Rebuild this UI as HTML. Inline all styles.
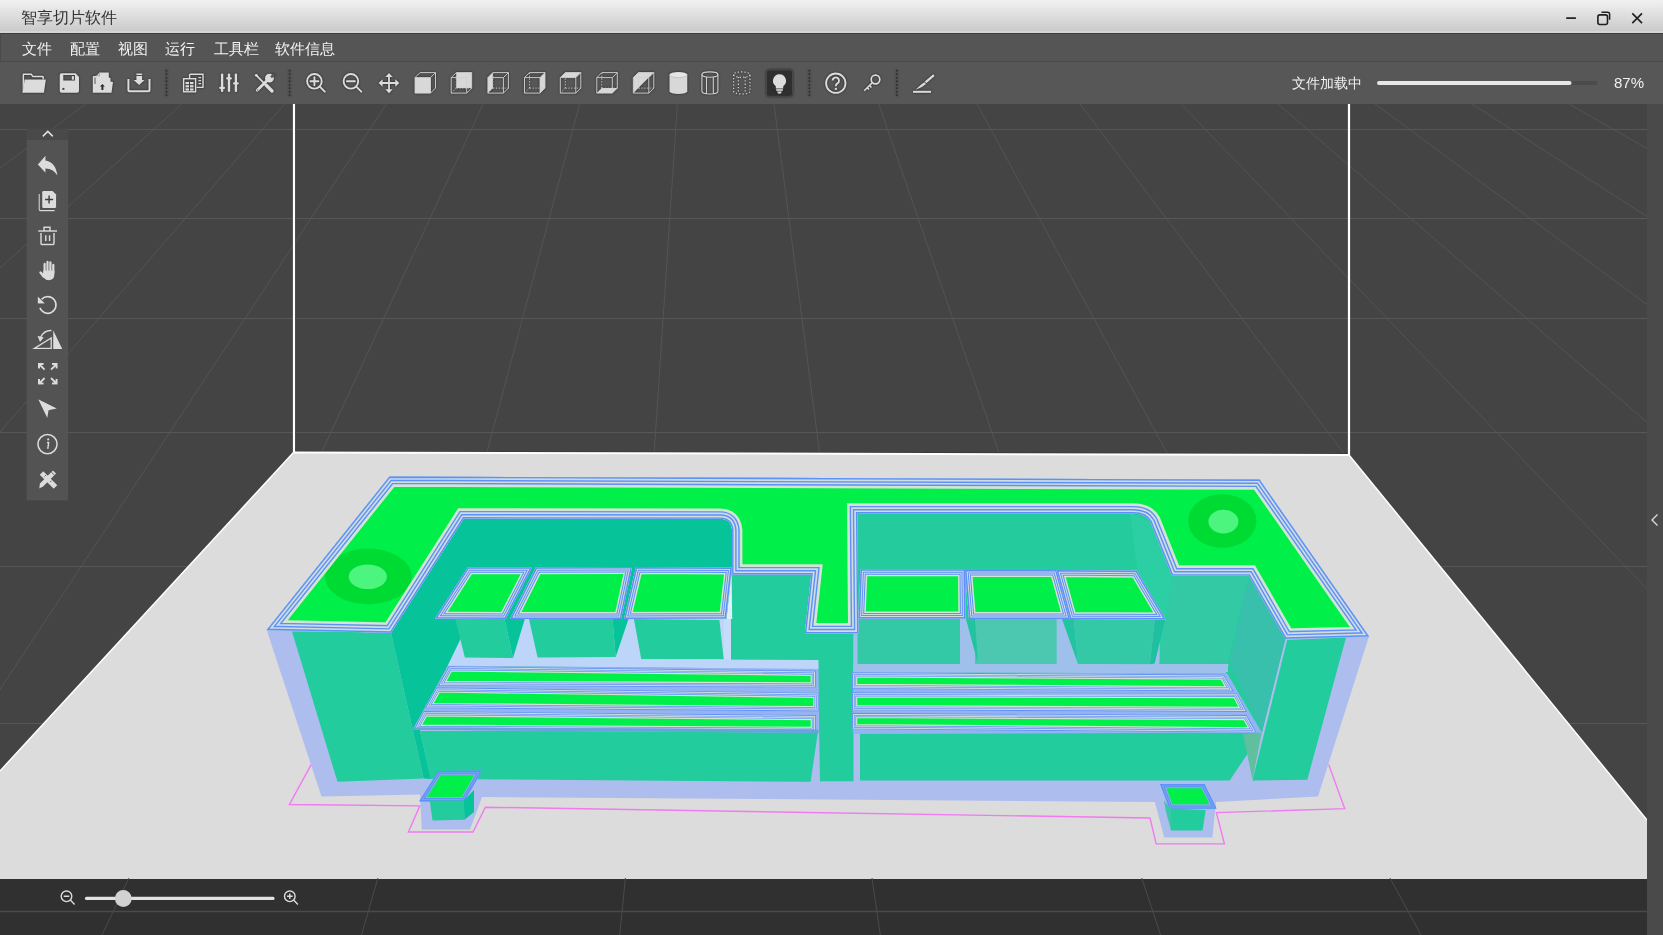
<!DOCTYPE html>
<html><head><meta charset="utf-8">
<style>
*{margin:0;padding:0;box-sizing:border-box}
html,body{width:1663px;height:935px;overflow:hidden;background:#444;font-family:"Liberation Sans",sans-serif}
.abs{position:absolute}
.t,#menu span,.txt{will-change:transform}
#vp{left:0;top:0}
#title{left:0;top:0;width:1663px;height:33px;background:linear-gradient(#f1f1f1 0,#cbcbcb 30.8px,#d5d5d5 30.8px,#d5d5d5 33px)}
#title .t{left:21.2px;top:8.5px;font-size:15.5px;color:#333;line-height:18px;white-space:nowrap}
#menu{left:0;top:33px;width:1663px;height:29px;background:#555;border-top:1px solid #3d3d3d;border-bottom:1px solid #4a4a4a;border-left:1px solid #4a4a4a}
#menu span{position:absolute;top:7.3px;font-size:14.5px;color:#f2f2f2;line-height:16px;white-space:nowrap}
#tool{left:0;top:62px;width:1663px;height:42px;background:#575757}
#tool .txt{position:absolute;top:75px;font-size:14px;color:#f0f0f0;line-height:16px;white-space:nowrap}
</style></head><body>
<svg id="vp" class="abs" width="1663" height="935" viewBox="0 0 1663 935">
<rect x="0" y="104" width="1647" height="831" fill="#444"/>
<g stroke="#575757" stroke-width="1" fill="none">
<path d="M0 129.5H1647M0 218.5H1647M0 318.5H1647M0 432.5H1647M0 566.5H1647M0 723.5H1647"/>
<path stroke="#545454" d="M85.6 104L-1022 935M181.9 104L-740 935M284.5 104L-436 935M386.5 104L-162.1 935M483.0 104L98.0 935M579.6 104L358.5 935M677.4 104L622.1 935M774.0 104L882.5 935M878.8 104L1165.1 935M977.0 104L1429.8 935M1080.0 104L1707.5 935M1181.0 104L1979.8 935M1278.0 104L2241.3 935M1375.0 104L2502.8 935M1472.0 104L2764.3 935M1569.0 104L3025.8 935"/>
</g>
<!-- bed -->
<polygon points="293.5,452.5 1349,455 1647,820 1647,879 0,879 0,771" fill="#dcdcdc"/>
<path d="M295.5 104V451M295 451.2L1347.5 453.6" stroke="#3a3a3a" stroke-width="1" fill="none"/>
<polyline points="0,771 293.5,452.5" fill="none" stroke="#fff" stroke-width="1.5"/><polyline points="1349,455 1647,820" fill="none" stroke="#fff" stroke-width="1.5"/><polyline points="293.5,452.5 1349,455" fill="none" stroke="#fff" stroke-width="2"/>
<path d="M294 104V452.5M1349 104V455" stroke="#fff" stroke-width="2.2"/>
<!-- bottom bar -->
<rect x="0" y="879" width="1647" height="56" fill="#303030"/>
<g stroke="#4a4a4a" stroke-width="1" fill="none">
<path d="M0 911.5H1647" stroke-width="1.6"/>
<path d="M377.9 878L361.5 935M625.4 878L619.7 935M872 878L880.3 935M1141.8 878L1160.6 935M1390 878L1421 935M129 878L102 935"/>
</g>
<rect x="292.5" y="32" width="2" height="1.2" fill="#fff"/><rect x="292.5" y="61" width="2" height="1.2" fill="#fff"/><rect x="1348" y="32" width="2" height="1.2" fill="#fff"/><rect x="1348" y="61" width="2" height="1.2" fill="#fff"/>
<!-- right panel -->
<rect x="1647" y="104" width="16" height="831" fill="#4a4a4a"/>
<path d="M1657.5 514.5L1652 520L1657.5 525.5" stroke="#ddd" stroke-width="1.3" fill="none"/>
<!--MODEL-->
<g id="model">
<polyline points="311.3,764.4 289.4,804.5 419.9,805.9 408.4,832 473,832 485.4,807.2 1150,818 1156.2,843.9 1224.4,843.9 1216.4,812.6 1344.7,808.6 1328.7,764.4" fill="none" stroke="#f07af0" stroke-width="1.4"/>
<polygon points="266.7,630 1368.9,636.5 1318,796.5 1216,802 1212.4,837.4 1164.2,837.4 1154.9,802 482,797 470,829.4 421.8,829.4 420,794.5 321.5,796.5" fill="#adbdee" />
<polygon points="463.8,518.5 732,518.5 732,574.5 731,668 447,667 420,731 431,779 423.6,778.6 391,632.7" fill="#07c399" />
<polygon points="731,574.5 811.3,574.5 804.9,633.3 853.5,633.3 853.5,781.3 820,781.3 818,660 731,660" fill="#22cc9d" />
<polygon points="466,619 731,619 731,667 447.5,666 461,638" fill="#bdd5f8" />
<polygon points="723.7,619 731,619 731,668 723.7,668" fill="#c6dcfa" />
<polygon points="455.3,619 504.5,619 513,658 464.9,657.5" fill="#22cc9d" />
<polygon points="504.5,619 524.8,619 513,658" fill="#07c399" />
<polygon points="529,619 612.5,619 615.7,657 537.6,657.5" fill="#22cc9d" />
<polygon points="612.5,619 628.5,619 615.7,657" fill="#07c399" />
<polygon points="633.9,619 719.4,620 723.7,659.2 641.3,659.2" fill="#22cc9d" />
<polygon points="857.3,510 1140,510 1155,520 1172,575.6 1249,575.6 1285.4,638.7 1262,732 860,732 853.5,633.3" fill="#24cc9d" />
<polygon points="1130,513 1150.6,522 1172,575.6 1159.5,664 1150,664" fill="#2ccfa4" />
<polygon points="1249,575.6 1285.4,638.7 1262,732 1229.8,662" fill="#38c0ac" />
<polygon points="853.5,619 1160,619 1159.5,664 1228,664 1228,672 853.5,672" fill="#9fc0ea" />
<polygon points="1159.5,664 1172,575.6 1249,575.6 1227.8,663.6" fill="#33c9a5" />
<polygon points="857.5,618.7 960,618.7 960,664 857.5,664" fill="#33c9a6" />
<polygon points="975,619 1056.7,619 1056.7,664 975,664" fill="#4dc8b0" />
<polygon points="966,619 975,619 978,664" fill="#22c4a0" />
<polygon points="1074,619 1154.7,619 1149.8,664.6 1078,664" fill="#33c9a6" />
<polygon points="1154.7,619.4 1165.2,619.4 1154.7,663.6 1149.8,664.6" fill="#1fc0a0" />
<polygon points="1062,619 1074,619 1078,664" fill="#22c4a0" />
<polygon points="420,731 818,731.5 810.6,781.8 431,779" fill="#22cc9d" />
<polygon points="860,729.7 1261.8,732.4 1229.7,780.5 860,780.5" fill="#22cc9d" />
<polygon points="1243,733.7 1261.8,732.4 1252.5,779.7" fill="#5fbf9f" />
<polygon points="292,631.6 391,632.6 423.6,778.6 337.5,781.8" fill="#22cc9d" />
<polygon points="1287.2,640.1 1346,637.4 1307.3,779.7 1252.5,780.5" fill="#22cc9d" />
<defs><path id="p1" d="M389.5 476.5L1259.5 479.5L1369 636.5L1285.4 638.7L1249 575.6L1172 575.6L1150.6 522Q1146 513.5 1133.5 513.5L857.3 513.5L858.4 633.3L804.9 633.3L811.3 574.5L732.1 574.5L732.1 530Q731 518.8 720 518.8L463.8 518.5L391 632.7L266.7 630Z"/><clipPath id="c1"><use href="#p1"/></clipPath></defs>
<g clip-path="url(#c1)" fill="none">
<use href="#p1" fill="#00ef48"/>
<ellipse cx="368.4" cy="576.5" rx="43.4" ry="28" fill="#00db34"/><ellipse cx="367.8" cy="576.8" rx="19.1" ry="12.3" fill="#4cf57e"/><ellipse cx="1222.3" cy="521" rx="34.2" ry="26.7" fill="#00db34"/><ellipse cx="1223.4" cy="521.6" rx="15" ry="11.8" fill="#4cf57e"/>
<use href="#p1" stroke="#d2e4d4" stroke-width="20.6"/>
<use href="#p1" stroke="#5f8ff9" stroke-width="15.2"/>
<use href="#p1" stroke="#cddde0" stroke-width="12.4"/>
<use href="#p1" stroke="#5f8ff9" stroke-width="9"/>
<use href="#p1" stroke="#cddde0" stroke-width="6.2"/>
<use href="#p1" stroke="#5f8ff9" stroke-width="2.8"/>
</g>
<defs><path id="p2" d="M468 567.3L532 567.3L505.5 619L435 618.6Z"/><clipPath id="c2"><use href="#p2"/></clipPath></defs>
<g clip-path="url(#c2)" fill="none">
<use href="#p2" fill="#00ef48"/>
<use href="#p2" stroke="#d2e4d4" stroke-width="14"/>
<use href="#p2" stroke="#5f8ff9" stroke-width="11"/>
<use href="#p2" stroke="#cddde0" stroke-width="9"/>
<use href="#p2" stroke="#5f8ff9" stroke-width="7"/>
<use href="#p2" stroke="#cddde0" stroke-width="5"/>
<use href="#p2" stroke="#5f8ff9" stroke-width="3"/>
</g>
<defs><path id="p3" d="M536 567.3L632 567L621 619L510 619Z"/><clipPath id="c3"><use href="#p3"/></clipPath></defs>
<g clip-path="url(#c3)" fill="none">
<use href="#p3" fill="#00ef48"/>
<use href="#p3" stroke="#d2e4d4" stroke-width="14"/>
<use href="#p3" stroke="#5f8ff9" stroke-width="11"/>
<use href="#p3" stroke="#cddde0" stroke-width="9"/>
<use href="#p3" stroke="#5f8ff9" stroke-width="7"/>
<use href="#p3" stroke="#cddde0" stroke-width="5"/>
<use href="#p3" stroke="#5f8ff9" stroke-width="3"/>
</g>
<defs><path id="p4" d="M636 567L731.8 567.4L726 618.5L624 619Z"/><clipPath id="c4"><use href="#p4"/></clipPath></defs>
<g clip-path="url(#c4)" fill="none">
<use href="#p4" fill="#00ef48"/>
<use href="#p4" stroke="#d2e4d4" stroke-width="14"/>
<use href="#p4" stroke="#5f8ff9" stroke-width="11"/>
<use href="#p4" stroke="#cddde0" stroke-width="9"/>
<use href="#p4" stroke="#5f8ff9" stroke-width="7"/>
<use href="#p4" stroke="#cddde0" stroke-width="5"/>
<use href="#p4" stroke="#5f8ff9" stroke-width="3"/>
</g>
<defs><path id="p5" d="M860.5 569.2L965 569.2L965.4 618.4L858.5 618.4Z"/><clipPath id="c5"><use href="#p5"/></clipPath></defs>
<g clip-path="url(#c5)" fill="none">
<use href="#p5" fill="#00ef48"/>
<use href="#p5" stroke="#d2e4d4" stroke-width="14"/>
<use href="#p5" stroke="#5f8ff9" stroke-width="11"/>
<use href="#p5" stroke="#cddde0" stroke-width="9"/>
<use href="#p5" stroke="#5f8ff9" stroke-width="7"/>
<use href="#p5" stroke="#cddde0" stroke-width="5"/>
<use href="#p5" stroke="#5f8ff9" stroke-width="3"/>
</g>
<defs><path id="p6" d="M965 570L1056.5 570L1070 619L969 619Z"/><clipPath id="c6"><use href="#p6"/></clipPath></defs>
<g clip-path="url(#c6)" fill="none">
<use href="#p6" fill="#00ef48"/>
<use href="#p6" stroke="#d2e4d4" stroke-width="14"/>
<use href="#p6" stroke="#5f8ff9" stroke-width="11"/>
<use href="#p6" stroke="#cddde0" stroke-width="9"/>
<use href="#p6" stroke="#5f8ff9" stroke-width="7"/>
<use href="#p6" stroke="#cddde0" stroke-width="5"/>
<use href="#p6" stroke="#5f8ff9" stroke-width="3"/>
</g>
<defs><path id="p7" d="M1056.5 570L1136.7 570.8L1165.5 619.4L1070 619Z"/><clipPath id="c7"><use href="#p7"/></clipPath></defs>
<g clip-path="url(#c7)" fill="none">
<use href="#p7" fill="#00ef48"/>
<use href="#p7" stroke="#d2e4d4" stroke-width="14"/>
<use href="#p7" stroke="#5f8ff9" stroke-width="11"/>
<use href="#p7" stroke="#cddde0" stroke-width="9"/>
<use href="#p7" stroke="#5f8ff9" stroke-width="7"/>
<use href="#p7" stroke="#cddde0" stroke-width="5"/>
<use href="#p7" stroke="#5f8ff9" stroke-width="3"/>
</g>
<polygon points="726.5,619 731.6,572 732.2,619" fill="#e2eefa" />
<polygon points="458,658.2 818.5,659.9 818.5,669.1 447.7,665.8" fill="#bdd5f8" />
<polygon points="853.1,664.2 1228.8,664.3 1225.6,673.5 853.1,672.3" fill="#9fc0ea" />
<polygon points="447.7,665.8 818.5,669.1 818.5,732.9 412.6,729.7" fill="#93b3f4" />
<polygon points="853.1,672.3 1227.2,673.5 1261.8,732.5 853.1,734" fill="#93b3f4" />
<defs><path id="p8" d="M448.75 666.2L815.9 670.6L815.9 687.6L437.85 686Z"/><clipPath id="c8"><use href="#p8"/></clipPath></defs>
<g clip-path="url(#c8)" fill="none">
<use href="#p8" fill="#00ef48"/>
<use href="#p8" stroke="#d2e4d4" stroke-width="10.6"/>
<use href="#p8" stroke="#5f8ff9" stroke-width="8.2"/>
<use href="#p8" stroke="#cddde0" stroke-width="6.8"/>
<use href="#p8" stroke="#5f8ff9" stroke-width="5.2"/>
<use href="#p8" stroke="#cddde0" stroke-width="3.8"/>
<use href="#p8" stroke="#5f8ff9" stroke-width="1.8"/>
</g>
<defs><path id="p9" d="M436.55 687.3L818.6 692.7L818.6 711.4L424.85 708.2Z"/><clipPath id="c9"><use href="#p9"/></clipPath></defs>
<g clip-path="url(#c9)" fill="none">
<use href="#p9" fill="#00ef48"/>
<use href="#p9" stroke="#d2e4d4" stroke-width="10.6"/>
<use href="#p9" stroke="#5f8ff9" stroke-width="8.2"/>
<use href="#p9" stroke="#cddde0" stroke-width="6.8"/>
<use href="#p9" stroke="#5f8ff9" stroke-width="5.2"/>
<use href="#p9" stroke="#cddde0" stroke-width="3.8"/>
<use href="#p9" stroke="#5f8ff9" stroke-width="1.8"/>
</g>
<defs><path id="p10" d="M423.55 711.1L816 715L816 732L413.65 729.8Z"/><clipPath id="c10"><use href="#p10"/></clipPath></defs>
<g clip-path="url(#c10)" fill="none">
<use href="#p10" fill="#00ef48"/>
<use href="#p10" stroke="#d2e4d4" stroke-width="10.6"/>
<use href="#p10" stroke="#5f8ff9" stroke-width="8.2"/>
<use href="#p10" stroke="#cddde0" stroke-width="6.8"/>
<use href="#p10" stroke="#5f8ff9" stroke-width="5.2"/>
<use href="#p10" stroke="#cddde0" stroke-width="3.8"/>
<use href="#p10" stroke="#5f8ff9" stroke-width="1.8"/>
</g>
<defs><path id="p11" d="M852 672.2L1223.8 674.5L1234 691.5L852 689Z"/><clipPath id="c11"><use href="#p11"/></clipPath></defs>
<g clip-path="url(#c11)" fill="none">
<use href="#p11" fill="#00ef48"/>
<use href="#p11" stroke="#d2e4d4" stroke-width="10.6"/>
<use href="#p11" stroke="#5f8ff9" stroke-width="8.2"/>
<use href="#p11" stroke="#cddde0" stroke-width="6.8"/>
<use href="#p11" stroke="#5f8ff9" stroke-width="5.2"/>
<use href="#p11" stroke="#cddde0" stroke-width="3.8"/>
<use href="#p11" stroke="#5f8ff9" stroke-width="1.8"/>
</g>
<defs><path id="p12" d="M852 692.2L1237 692.9L1247 712L852 710.3Z"/><clipPath id="c12"><use href="#p12"/></clipPath></defs>
<g clip-path="url(#c12)" fill="none">
<use href="#p12" fill="#00ef48"/>
<use href="#p12" stroke="#d2e4d4" stroke-width="10.6"/>
<use href="#p12" stroke="#5f8ff9" stroke-width="8.2"/>
<use href="#p12" stroke="#cddde0" stroke-width="6.8"/>
<use href="#p12" stroke="#5f8ff9" stroke-width="5.2"/>
<use href="#p12" stroke="#cddde0" stroke-width="3.8"/>
<use href="#p12" stroke="#5f8ff9" stroke-width="1.8"/>
</g>
<defs><path id="p13" d="M852 712.8L1246.7 715L1256.7 732.6L852 729.3Z"/><clipPath id="c13"><use href="#p13"/></clipPath></defs>
<g clip-path="url(#c13)" fill="none">
<use href="#p13" fill="#00ef48"/>
<use href="#p13" stroke="#d2e4d4" stroke-width="10.6"/>
<use href="#p13" stroke="#5f8ff9" stroke-width="8.2"/>
<use href="#p13" stroke="#cddde0" stroke-width="6.8"/>
<use href="#p13" stroke="#5f8ff9" stroke-width="5.2"/>
<use href="#p13" stroke="#cddde0" stroke-width="3.8"/>
<use href="#p13" stroke="#5f8ff9" stroke-width="1.8"/>
</g>
<polygon points="412.6,727.5 818.5,729.5 818.5,732.9 412.6,729.7" fill="#62a6da" />
<defs><path id="p14" d="M438.5 771L481.8 770.8L464.1 801.2L419.4 801.2Z"/><clipPath id="c14"><use href="#p14"/></clipPath></defs>
<g clip-path="url(#c14)" fill="none">
<use href="#p14" fill="#00ef48"/>
<use href="#p14" stroke="#86b2e6" stroke-width="8.6"/>
<use href="#p14" stroke="#5f8ff9" stroke-width="6.4"/>
<use href="#p14" stroke="#79a6ee" stroke-width="4.4"/>
<use href="#p14" stroke="#5f8ff9" stroke-width="2.4"/>
</g>
<polygon points="429.8,800.5 463.7,800.5 464.5,819.8 432.5,820.6" fill="#22cc9d" />
<polygon points="463.7,800.5 474,790 474,812 464.5,819.8" fill="#07c399" />
<defs><path id="p15" d="M1160.2 784L1204.3 784L1216.4 808.6L1169.6 808.6Z"/><clipPath id="c15"><use href="#p15"/></clipPath></defs>
<g clip-path="url(#c15)" fill="none">
<use href="#p15" fill="#00ef48"/>
<use href="#p15" stroke="#86b2e6" stroke-width="8.6"/>
<use href="#p15" stroke="#5f8ff9" stroke-width="6.4"/>
<use href="#p15" stroke="#79a6ee" stroke-width="4.4"/>
<use href="#p15" stroke="#5f8ff9" stroke-width="2.4"/>
</g>
<polygon points="1171,808.6 1205.7,810 1202.5,830.5 1171,830.5" fill="#22cc9d" />
<polygon points="1164,800.5 1171,808.6 1171,830.5 1166,812" fill="#3cc6aa" />
</g>
<!--/MODEL-->
</svg>
<div id="title" class="abs"><div class="t abs">智享切片软件</div>
<svg class="abs" style="left:0;top:0" width="1663" height="33">
<path d="M1566.2 18.1H1575.9" stroke="#1e1e1e" stroke-width="1.7"/>
<path d="M1601.5 12.2H1607.6a2 2 0 0 1 2 2V19.8" fill="none" stroke="#1e1e1e" stroke-width="1.5"/>
<rect x="1597.9" y="14.9" width="9.6" height="9.6" rx="2" fill="none" stroke="#1e1e1e" stroke-width="1.6"/>
<path d="M1632.3 13.4L1642 23.1M1642 13.4L1632.3 23.1" stroke="#1e1e1e" stroke-width="1.6"/>
</svg>
</div>
<div id="menu" class="abs">
<span style="left:20.5px">文件</span><span style="left:69px">配置</span><span style="left:116.5px">视图</span><span style="left:164px">运行</span><span style="left:212.5px">工具栏</span><span style="left:274px">软件信息</span>
</div>
<div id="tool" class="abs"></div>
<!--TB-->
<svg class="abs" style="left:0;top:62px;filter:drop-shadow(0 0 0.8px rgba(30,30,30,.9))" width="1663" height="42" viewBox="0 62 1663 42">
<g fill="#dcdcdc" stroke="none">
<!-- folder -->
<path d="M22.6 92.7V74.8Q22.6 73.6 23.8 73.6H31.6L33.3 75.8H42.6Q43.9 75.8 43.9 77.1V79.3H42.4V77.3H32.6L30.9 75.1H24.1V80.5Q24 85 23.4 92.7Z"/>
<path d="M24.6 79.6H45.9L43.9 92.7H22.7Z"/>
<!-- save -->
<path d="M59.7 75.2Q59.7 73.3 61.6 73.3H75.6L79 77V90.8Q79 92.7 77.1 92.7H61.6Q59.7 92.7 59.7 90.8ZM63.3 75.1V80.4H74.9V75.1Z" fill-rule="evenodd"/>
<rect x="71.8" y="76.1" width="2.1" height="3.6"/>
<rect x="62.4" y="87.9" width="2" height="2" fill="#444"/>
<!-- upload doc -->
<path d="M96.5 75.8L99.5 72.4H108.8V77.5L110.5 78V81.5L113 82L111.5 92.7H92.8L92.8 76.3Z"/>
<path d="M99.5 72.4V75.8H96.5" fill="none" stroke="#9a9a9a" stroke-width="0.8"/>
<path d="M95 77.5V84" fill="none" stroke="#555" stroke-width="1"/>
<path d="M102.4 84L99.9 86.6H101.4V90.1H103.4V86.6H104.9Z" fill="#2e2e2e"/>
<!-- download tray -->
<path d="M128.4 79V90.2Q128.4 91.2 129.4 91.2H148.5Q149.5 91.2 149.5 90.2V79" fill="none" stroke="#dcdcdc" stroke-width="2"/>
<rect x="136.4" y="73.5" width="5.7" height="1.6"/>
<rect x="136.4" y="76" width="5.7" height="4.2"/>
<path d="M133.6 80H144.6L139.1 85Z"/>
<!-- grid docs -->
<path d="M189.6 74.3H203V87.4H196.6M189.6 78V74.3" fill="none" stroke="#dcdcdc" stroke-width="1.4"/>
<rect x="198.5" y="77" width="2.6" height="1.2"/><rect x="198.5" y="80" width="2.6" height="1.2"/><rect x="198.5" y="83" width="2.6" height="1.2"/>
<rect x="183.6" y="78.7" width="12" height="13.1" fill="none" stroke="#dcdcdc" stroke-width="1.4"/>
<rect x="185.5" y="82" width="3.5" height="2.2"/><rect x="190" y="82" width="3.5" height="2.2"/>
<rect x="185.5" y="85.2" width="3.5" height="2.2"/><rect x="190" y="85.2" width="3.5" height="2.2"/>
<rect x="185.5" y="88.4" width="3.5" height="2.2"/><rect x="190" y="88.4" width="3.5" height="2.2"/>
<!-- sliders -->
<rect x="220.9" y="73.6" width="2.4" height="18.3" rx="1"/><rect x="227.8" y="73.6" width="2.4" height="18.3" rx="1"/><rect x="234.7" y="73.6" width="2.4" height="18.3" rx="1"/>
<rect x="219.2" y="86.8" width="5.8" height="2.2" rx="1"/><rect x="226.1" y="77.2" width="5.8" height="2.2" rx="1"/><rect x="233" y="82.3" width="5.8" height="2.2" rx="1"/>
<!-- tools -->
<path d="M256.6 75.6L265.3 84.3" stroke="#dcdcdc" stroke-width="1.7" stroke-linecap="round"/>
<circle cx="256.3" cy="75.3" r="1.4"/>
<path d="M266 85L272 91" stroke="#dcdcdc" stroke-width="3.4" stroke-linecap="round"/>
<path d="M257.2 90.3L266.8 80.7" stroke="#dcdcdc" stroke-width="2.8" stroke-linecap="round"/>
<circle cx="269.4" cy="78.2" r="4.4"/>
<path d="M270.2 76.4L273.6 73L275.4 74.8L272 78.2Z" fill="#575757"/>
<circle cx="257.6" cy="89.9" r="0.7" fill="#575757"/>
<polygon points="415.0,77.6 430.5,77.6 430.5,93.1 415.0,93.1" fill="#d8d8d8"/><path d="M415.0 77.6L430.5 77.6M430.5 77.6L430.5 93.1M430.5 93.1L415.0 93.1M415.0 93.1L415.0 77.6M420.0 72.6L435.5 72.6M435.5 72.6L435.5 88.1M415.0 77.6L420.0 72.6M430.5 77.6L435.5 72.6M430.5 93.1L435.5 88.1" fill="none" stroke="#d0d0d0" stroke-width="0.95"/>
<polygon points="456.2,72.6 471.7,72.6 471.7,88.1 456.2,88.1" fill="#d8d8d8"/><path d="M451.2 77.6L466.7 77.6M466.7 77.6L466.7 93.1M466.7 93.1L451.2 93.1M451.2 93.1L451.2 77.6M456.2 72.6L471.7 72.6M471.7 72.6L471.7 88.1M451.2 77.6L456.2 72.6M466.7 77.6L471.7 72.6M466.7 93.1L471.7 88.1" fill="none" stroke="#d0d0d0" stroke-width="0.95"/><path d="M471.7 88.1L456.2 88.1M456.2 88.1L456.2 72.6M451.2 93.1L456.2 88.1" fill="none" stroke="#c8c8c8" stroke-width="1" stroke-dasharray="1.2 1.6"/>
<polygon points="487.9,77.6 492.9,72.6 492.9,88.1 487.9,93.1" fill="#d8d8d8"/><path d="M487.9 77.6L503.4 77.6M503.4 77.6L503.4 93.1M503.4 93.1L487.9 93.1M487.9 93.1L487.9 77.6M492.9 72.6L508.4 72.6M508.4 72.6L508.4 88.1M487.9 77.6L492.9 72.6M503.4 77.6L508.4 72.6M503.4 93.1L508.4 88.1" fill="none" stroke="#d0d0d0" stroke-width="0.95"/><path d="M508.4 88.1L492.9 88.1M492.9 88.1L492.9 72.6M487.9 93.1L492.9 88.1" fill="none" stroke="#c8c8c8" stroke-width="1" stroke-dasharray="1.2 1.6"/>
<polygon points="540.0,77.6 545.0,72.6 545.0,88.1 540.0,93.1" fill="#d8d8d8"/><path d="M524.5 77.6L540.0 77.6M540.0 77.6L540.0 93.1M540.0 93.1L524.5 93.1M524.5 93.1L524.5 77.6M529.5 72.6L545.0 72.6M545.0 72.6L545.0 88.1M524.5 77.6L529.5 72.6M540.0 77.6L545.0 72.6M540.0 93.1L545.0 88.1" fill="none" stroke="#d0d0d0" stroke-width="0.95"/><path d="M545.0 88.1L529.5 88.1M529.5 88.1L529.5 72.6M524.5 93.1L529.5 88.1" fill="none" stroke="#c8c8c8" stroke-width="1" stroke-dasharray="1.2 1.6"/>
<polygon points="560.3,77.6 565.3,72.6 580.8,72.6 575.8,77.6" fill="#d8d8d8"/><path d="M560.3 77.6L575.8 77.6M575.8 77.6L575.8 93.1M575.8 93.1L560.3 93.1M560.3 93.1L560.3 77.6M565.3 72.6L580.8 72.6M580.8 72.6L580.8 88.1M560.3 77.6L565.3 72.6M575.8 77.6L580.8 72.6M575.8 93.1L580.8 88.1" fill="none" stroke="#d0d0d0" stroke-width="0.95"/><path d="M580.8 88.1L565.3 88.1M565.3 88.1L565.3 72.6M560.3 93.1L565.3 88.1" fill="none" stroke="#c8c8c8" stroke-width="1" stroke-dasharray="1.2 1.6"/>
<polygon points="596.8,93.1 601.8,88.1 617.3,88.1 612.3,93.1" fill="#d8d8d8"/><path d="M596.8 77.6L612.3 77.6M612.3 77.6L612.3 93.1M612.3 93.1L596.8 93.1M596.8 93.1L596.8 77.6M601.8 72.6L617.3 72.6M617.3 72.6L617.3 88.1M596.8 77.6L601.8 72.6M612.3 77.6L617.3 72.6M612.3 93.1L617.3 88.1" fill="none" stroke="#d0d0d0" stroke-width="0.95"/><path d="M617.3 88.1L601.8 88.1M601.8 88.1L601.8 72.6M596.8 93.1L601.8 88.1" fill="none" stroke="#c8c8c8" stroke-width="1" stroke-dasharray="1.2 1.6"/>
<polygon points="633.3,77.6 638.3,72.6 653.8,72.6 633.3,93.1" fill="#d8d8d8"/><path d="M633.3 77.6L648.8 77.6M648.8 77.6L648.8 93.1M648.8 93.1L633.3 93.1M633.3 93.1L633.3 77.6M638.3 72.6L653.8 72.6M653.8 72.6L653.8 88.1M633.3 77.6L638.3 72.6M648.8 77.6L653.8 72.6M648.8 93.1L653.8 88.1" fill="none" stroke="#d0d0d0" stroke-width="0.95"/><path d="M653.8 88.1L638.3 88.1M638.3 88.1L638.3 72.6M633.3 93.1L638.3 88.1" fill="none" stroke="#c8c8c8" stroke-width="1" stroke-dasharray="1.2 1.6"/>
<path d="M669.5 74.8V91.3A8.9 2.8 0 0 0 687.3 91.3V74.8Z" fill="#d8d8d8"/><ellipse cx="678.4" cy="74.8" rx="8.9" ry="2.8" fill="#e6e6e6"/><path d="M669.5 74.8A8.9 2.8 0 0 0 687.3 74.8" fill="none" stroke="#bcbcbc" stroke-width="0.8"/>
<g fill="none" stroke="#d0d0d0" stroke-width="1.1"><ellipse cx="709.9" cy="74.6" rx="8" ry="2.7"/><path d="M701.9 74.6V91.3A8 2.7 0 0 0 717.9 91.3V74.6M706.5 77V93.5M713.3 77V93.5"/></g>
<g fill="none" stroke="#d0d0d0" stroke-width="1.2" stroke-dasharray="1.3 2"><ellipse cx="741.8" cy="74.6" rx="8.2" ry="2.7"/><path d="M733.6 74.6V91.3A8.2 2.7 0 0 0 750 91.3V74.6M738.4 77V93.5M745.2 77V93.5"/></g>
<rect x="766.5" y="70" width="26" height="26.3" rx="2.5" fill="#2f2f2f" stroke="#494949" stroke-width="1"/><path d="M779.5 74.2A6.6 6.6 0 0 0 775.8 86.2V88.4H783.2V86.2A6.6 6.6 0 0 0 779.5 74.2Z" fill="#dcdcdc"/><rect x="776.2" y="89.2" width="6.6" height="1.6" fill="#dcdcdc"/><path d="M777.3 91.5H781.7A2.2 2.2 0 0 1 777.3 91.5Z" fill="#dcdcdc"/>
<circle cx="835.8" cy="83.2" r="9.7" fill="none" stroke="#dcdcdc" stroke-width="1.9"/><path d="M832.6 80.6A3.2 3.2 0 1 1 837.4 83.4Q835.8 84.3 835.8 86.2" fill="none" stroke="#dcdcdc" stroke-width="1.9"/><rect x="834.8" y="87.8" width="2.1" height="2.1" fill="#dcdcdc"/>
<circle cx="875.5" cy="79.5" r="4.3" fill="none" stroke="#dcdcdc" stroke-width="1.7"/><path d="M872.5 82.5L864.2 90.8M869.5 85.5L871.5 87.5M867.3 87.7L869 89.4" fill="none" stroke="#dcdcdc" stroke-width="1.6"/>
<rect x="913" y="90.8" width="18" height="2" fill="#dcdcdc"/><path d="M924.7 81.5L933.2 74.3L934.6 76L926.3 83.3Z" fill="#dcdcdc"/><path d="M915.5 89.8Q920 85 924.3 82.3L926 84Q922 88 915.5 89.8Z" fill="#dcdcdc"/>
<!-- zoom in / out -->
<circle cx="314.4" cy="81.3" r="7.3" fill="none" stroke="#dcdcdc" stroke-width="1.9"/>
<path d="M319.8 86.7L324.8 91.7M310.4 81.3H318.4M314.4 77.3V85.3" stroke="#dcdcdc" stroke-width="1.9" stroke-linecap="round"/>
<circle cx="350.9" cy="81.3" r="7.3" fill="none" stroke="#dcdcdc" stroke-width="1.9"/>
<path d="M356.3 86.7L361.3 91.7M346.9 81.3H354.9" stroke="#dcdcdc" stroke-width="1.9" stroke-linecap="round"/>
<!-- move -->
<path d="M389 75.5V90.5M381.5 83H396.5" stroke="#dcdcdc" stroke-width="1.8"/>
<path d="M389 73L385.3 77H392.7ZM389 93.2L385.3 89.2H392.7ZM378.6 83L382.6 79.3V86.7ZM399.3 83L395.3 79.3V86.7Z"/>
</g>
<g fill="none" stroke="#2c2c2c" stroke-width="1.5" stroke-dasharray="1.5 2">
<path d="M166.5 70V96M289.6 70V96M809.4 70V96M896.7 70V96"/>
</g>
</svg>
<!--/TB-->
<!--SIDE-->
<svg class="abs" style="left:0;top:120px" width="80" height="390" viewBox="0 120 80 390">
<rect x="26.5" y="128.5" width="42" height="11.5" fill="#494949"/>
<rect x="26.7" y="140" width="41.5" height="360.4" fill="#535353"/>
<g style="filter:drop-shadow(0 0 0.6px rgba(40,40,40,.8))">
<path d="M42.8 136.4L47.8 131.4L52.8 136.4" fill="none" stroke="#e6e6e6" stroke-width="1.5"/>
<!-- undo -->
<path d="M37.8 164.4L45.5 155.8V160.6Q55.5 162 57.4 175.4Q53 168.8 45.5 168.6V172.8Z" fill="#dcdcdc"/>
<!-- copy add -->
<path d="M39.2 194V209.5Q39.2 210.6 40.3 210.6H54.6" fill="none" stroke="#dcdcdc" stroke-width="1.1"/>
<path d="M42.2 192.2Q42.2 191 43.4 191H52.6L56.1 194.5V206.7Q56.1 207.9 54.9 207.9H43.4Q42.2 207.9 42.2 206.7Z" fill="#dcdcdc"/>
<path d="M49.1 195.5V203.5M45.1 199.5H53.1" stroke="#3c3c3c" stroke-width="1.4"/>
<!-- trash -->
<path d="M38.2 231H57M44 230.6V227.2H50V230.6M41 233V243.4Q41 244.6 42.2 244.6H52.8Q54 244.6 54 243.4V233M45.8 235.3V241M49.6 235.3V241" fill="none" stroke="#dcdcdc" stroke-width="1.5"/>
<!-- hand -->
<g stroke="#dcdcdc" stroke-linecap="round" fill="none" stroke-width="2.3">
<path d="M44.6 264V272M47.5 262V271.5M50.4 262.4V271.5M53.3 265V273"/>
<path d="M40.6 272.5L43.6 276.5" stroke-width="2.6"/>
</g>
<path d="M43.4 270.5H54.4V274.5Q54.4 280.2 48.6 280.2Q45 280.2 42.6 276Z" fill="#dcdcdc"/>
<!-- rotate -->
<path d="M41.6 299.3A8.3 8.3 0 1 1 39.9 307.8" fill="none" stroke="#dcdcdc" stroke-width="1.7"/>
<path d="M37.8 296.5V303.6H44.9Z" fill="#dcdcdc"/>
<!-- mirror -->
<path d="M53.2 330.2L62.3 348.9H53.2Z" fill="#dcdcdc"/>
<path d="M34.5 348.4L51.2 338V348.4Z" fill="none" stroke="#dcdcdc" stroke-width="1.4"/>
<path d="M51.5 330.5Q44 330 40.5 337.5" fill="none" stroke="#dcdcdc" stroke-width="1.4"/>
<path d="M37.4 335.8L40 342L43.8 337.5Z" fill="#dcdcdc"/>
<!-- expand -->
<g fill="none" stroke="#dcdcdc" stroke-width="2">
<path d="M39 364L44.6 369.6M39 368.6V364H43.6"/>
<path d="M56.6 364L51 369.6M56.6 368.6V364H52"/>
<path d="M39 383.6L44.6 378M39 379V383.6H43.6"/>
<path d="M56.6 383.6L51 378M56.6 379V383.6H52"/>
</g>
<!-- pointer -->
<path d="M38.2 399.2L56.9 408.6L48.6 410.3L47.3 417.9Z" fill="#dcdcdc"/>
<!-- info -->
<circle cx="47.5" cy="444.1" r="9.6" fill="none" stroke="#dcdcdc" stroke-width="1.6"/>
<circle cx="48.2" cy="439.4" r="1.1" fill="#dcdcdc"/>
<path d="M47 442.5H48.6L47.8 448.8" fill="none" stroke="#dcdcdc" stroke-width="1.5"/>
<!-- ruler pencil -->
<path d="M43.3 471.2L57.3 485.2L53.7 488.8L39.7 474.8Z" fill="#dcdcdc"/>
<path d="M44.5 476.5L45.8 475.2M47.3 479.3L48.6 478M50.1 482.1L51.4 480.8" stroke="#555" stroke-width="0.9"/>
<path d="M52.9 470.4L56.1 473.6L43.1 486.6L39.2 488.6L39.9 483.4Z" fill="#dcdcdc"/>
<path d="M51.3 472L54.5 475.2" stroke="#555" stroke-width="0.9"/>
</g>
</svg>
<svg class="abs" style="left:0;top:880px" width="320" height="30" viewBox="0 880 320 30">
<g fill="none" stroke="#dcdcdc" stroke-width="1.4">
<circle cx="66.5" cy="896.3" r="5.3"/><path d="M70.3 900.1L74.6 904.4M63.7 896.3H69.3"/>
<circle cx="289.8" cy="896.3" r="5.3"/><path d="M293.6 900.1L297.9 904.4M287 896.3H292.6M289.8 893.5V899.1"/>
</g>
<path d="M86.5 898.4H273" stroke="#e2e2e2" stroke-width="3.2" stroke-linecap="round"/>
<circle cx="123.3" cy="898.5" r="8.4" fill="#d2d2d2"/>
</svg>
<!--/SIDE-->
<!--PROG-->
<div class="abs txt" style="left:1291.5px;top:75px;font-size:14.3px;line-height:16px;color:#f0f0f0;white-space:nowrap">文件加载中</div>
<svg class="abs" style="left:1370px;top:76px" width="290" height="14" viewBox="1370 76 290 14"><path d="M1379 83H1595.5" stroke="#4b4b4b" stroke-width="4" stroke-linecap="round"/><path d="M1379 83H1569.5" stroke="#e8e8e8" stroke-width="4" stroke-linecap="round"/></svg>
<div class="abs txt" style="left:1614px;top:74.5px;font-size:15px;line-height:16px;color:#f0f0f0;white-space:nowrap">87%</div>
<!--/PROG-->

</body></html>
